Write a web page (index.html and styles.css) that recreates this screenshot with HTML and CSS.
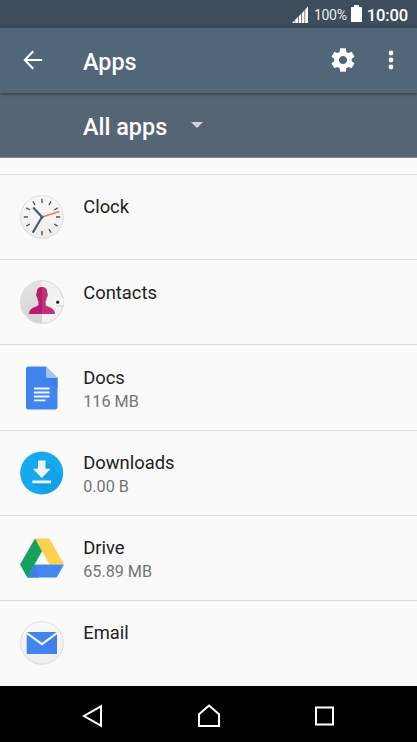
FILE: index.html
```
<!DOCTYPE html>
<html lang="en">
<head>
    <meta charset="UTF-8">
    <meta name="viewport" content="width=device-width, initial-scale=1.0">
    <title>Apps</title>

    <link rel="stylesheet" href="styles.css">

</head>
<body>

    <div class="status-bar">
        <svg class="signal" width="17" height="17" viewBox="0 0 17 17">
            <path fill="#fff" d="M0 17 L2.6 14.3 V17Z M3.2 13.8 L6 11 V17 H3.2Z M6.7 10.3 L9.3 7.6 V17 H6.7Z M10 6.9 L12.5 4.3 V17 H10Z M13.2 3.6 L16 0.6 V17 H13.2Z"/>
        </svg>
        <span class="percent">100%</span>
        <svg class="battery" width="11" height="17" viewBox="0 0 11 17">
            <path fill="#fff" d="M3 0 H8 V2 H10.2 Q11 2 11 2.8 V16.2 Q11 17 10.2 17 H0.8 Q0 17 0 16.2 V2.8 Q0 2 0.8 2 H3Z"/>
        </svg>
        <span class="time">10:00</span>
    </div>

    <header class="toolbar">
        <svg class="back" width="20" height="20" viewBox="0 0 20 20">
            <path fill="none" stroke="#fff" stroke-width="2" d="M10.2 1.3 L1.8 10 L10.2 18.7 M1.8 10 H19.2"/>
        </svg>
        <h1>Apps</h1>
        <svg class="settings" width="28" height="28" viewBox="0 0 24 24">
            <path fill="#fff" d="M19.43 12.98c.04-.32.07-.64.07-.98s-.03-.66-.07-.98l2.11-1.65c.19-.15.24-.42.12-.64l-2-3.46c-.12-.22-.39-.3-.61-.22l-2.49 1c-.52-.4-1.08-.73-1.69-.98l-.38-2.65C14.46 2.18 14.25 2 14 2h-4c-.25 0-.46.18-.49.42l-.38 2.65c-.61.25-1.17.59-1.69.98l-2.49-1c-.23-.09-.49 0-.61.22l-2 3.46c-.13.22-.07.49.12.64l2.11 1.65c-.04.32-.07.65-.07.98s.03.66.07.98l-2.11 1.65c-.19.15-.24.42-.12.64l2 3.46c.12.22.39.3.61.22l2.49-1c.52.4 1.08.73 1.69.98l.38 2.65c.03.24.24.42.49.42h4c.25 0 .46-.18.49-.42l.38-2.65c.61-.25 1.17-.59 1.69-.98l2.49 1c.23.09.49 0 .61-.22l2-3.46c.12-.22.07-.49-.12-.64l-2.11-1.65zM12 15.5c-1.93 0-3.5-1.57-3.5-3.5s1.57-3.5 3.5-3.5 3.5 1.57 3.5 3.5-1.57 3.5-3.5 3.5z"/>
        </svg>
        <svg class="more" width="6" height="20" viewBox="0 0 6 20">
            <g fill="#fff">
                <circle cx="3" cy="3" r="2.4"/>
                <circle cx="3" cy="10" r="2.4"/>
                <circle cx="3" cy="17" r="2.4"/>
            </g>
        </svg>
    </header>

    <div class="filter">
        <span>All apps</span>
        <svg width="12" height="6" viewBox="0 0 12 6">
            <path fill="#d0d4de" d="M0 0 H12 L6 6Z"/>
        </svg>
    </div>

    <main class="app-list">
        <div class="app">
            <svg width="44" height="44" viewBox="0 0 44 44">
                <defs>
                    <linearGradient id="face" x1="0" y1="0" x2="0" y2="1">
                        <stop offset="0" stop-color="#f9f9f9"/>
                        <stop offset="1" stop-color="#ededed"/>
                    </linearGradient>
                </defs>
                <circle cx="22" cy="22" r="21.4" fill="url(#face)" stroke="#dadada" stroke-width=".9"/>
                <g stroke="#555" stroke-width="1.4">
                    <path id="ticks" d="M22 3.8 V8 M22 36 V40.2 M3.8 22 H8 M36 22 H40.2"/>
                    <use href="#ticks" transform="rotate(30 22 22)"/>
                    <use href="#ticks" transform="rotate(60 22 22)"/>
                </g>
                <path fill="none" stroke="#455a68" stroke-width="2.1" d="M13.2 12.5 L22 22 L12.8 37.5"/>
                <path stroke="#f0785a" stroke-width="1.4" d="M22 22 L39.5 16.5"/>
                <circle cx="22" cy="22" r="1.6" fill="#455a68"/>
            </svg>
            <div class="info">
                <p class="name">Clock</p>
            </div>
        </div>

        <div class="app">
            <svg width="44" height="44" viewBox="0 0 44 44">
                <defs>
                    <linearGradient id="page" x1="0" y1="0" x2="0" y2="1">
                        <stop offset="0" stop-color="#e4e4e4"/>
                        <stop offset="1" stop-color="#d3d3d3"/>
                    </linearGradient>
                </defs>
                <circle cx="22" cy="22" r="21.4" fill="#f1f1f1" stroke="#d2d2d2" stroke-width=".9"/>
                <path fill="url(#page)" d="M22 1 A21 21 0 0 0 22 43Z"/>
                <path fill="#b91a6d" d="M22 7 C26 7 27.4 9.5 27.2 13 C28.2 13.5 28 16.5 26.8 17.5 C26.5 19.5 26 20.5 25.6 21.5 V25 C27 27.5 35 27 35 34 H9 C9 27 17 27.5 18.4 25 V21.5 C18 20.5 17.5 19.5 17.2 17.5 C16 16.5 15.8 13.5 16.8 13 C16.6 9.5 18 7 22 7Z"/>
                <path fill="#fff" fill-opacity=".1" d="M22 7 C26 7 27.4 9.5 27.2 13 C28.2 13.5 28 16.5 26.8 17.5 L25.6 21.5 V25 C27 27.5 35 27 35 34 H22Z"/>
                <path fill="#d0d0d0" d="M36 19.5 H44 V26.5 H36Z"/>
                <path fill="#f8f8f8" d="M35 18.5 H43.6 V25.4 H35Z"/>
                <circle cx="37.7" cy="22.2" r="1.6" fill="#222"/>
            </svg>
            <div class="info">
                <p class="name">Contacts</p>
            </div>
        </div>

        <div class="app">
            <svg width="44" height="44" viewBox="0 0 44 44">
                <path fill="#4284ee" d="M8.5 .5 H26 L37.5 12 V41 Q37.5 43.5 35 43.5 H8.5 Q6 43.5 6 41 V3 Q6 .5 8.5 .5Z"/>
                <path fill="#3d7ce2" d="M27 12 H37.5 V22Z"/>
                <path fill="#a7c4f8" d="M26 .5 L37.5 12 H28 Q26 12 26 10Z"/>
                <path stroke="#f1f5fd" stroke-width="1.9" d="M14 22.5 H29.5 M14 26.5 H29.5 M14 30.5 H29.5 M14 34.4 H25.5"/>
            </svg>
            <div class="info">
                <p class="name">Docs</p>
                <p class="size">116 MB</p>
            </div>
        </div>

        <div class="app">
            <svg width="44" height="44" viewBox="0 0 44 44">
                <circle cx="21.7" cy="22" r="21.5" fill="#15a9ef"/>
                <path fill="#1293d3" d="M25.5 9.5 L42.5 26.5 A21.5 21.5 0 0 1 27 42.8 L12.5 32 L31 29.5 L22 27Z" opacity=".35"/>
                <path fill="#f2f2f2" d="M18 9.5 H25.5 V17.8 H30.8 L21.8 27 L12.8 17.8 H18Z"/>
                <path fill="#f2f2f2" d="M12.3 29.5 H31 V32.3 H12.3Z"/>
            </svg>
            <div class="info">
                <p class="name">Downloads</p>
                <p class="size">0.00 B</p>
            </div>
        </div>

        <div class="app">
            <svg width="44" height="44" viewBox="0 0 44 44">
                <path fill="#ffd04b" d="M15 2.5 H29.5 L44 28.5 H29.5Z"/>
                <path fill="#4485ee" d="M14.5 28.5 H44 L36.6 41.5 H7.2Z"/>
                <path fill="#3f7ee5" d="M14.5 28.5 L19 41.5 H7.2Z"/>
                <path fill="#16a05d" d="M15 2.5 L22 15.2 L7.2 41.5 L0 28.5Z"/>
            </svg>
            <div class="info">
                <p class="name">Drive</p>
                <p class="size">65.89 MB</p>
            </div>
        </div>

        <div class="app">
            <svg width="44" height="44" viewBox="0 0 44 44">
                <circle cx="22" cy="22" r="21.4" fill="url(#face)" stroke="#dadada" stroke-width=".9"/>
                <path fill="#4285f0" d="M6.7 11 H37 V33 H6.7Z"/>
                <path fill="#3e7fea" d="M22 23 L37 12 V33Z"/>
                <path fill="none" stroke="#f3f5f8" stroke-width="2.1" d="M6.5 11.8 L22 23.2 L37.2 11.8"/>
                <path fill="#4285f0" d="M9 11 H35 L22 20.5Z"/>
            </svg>
            <div class="info">
                <p class="name">Email</p>
            </div>
        </div>
    </main>

    <nav class="nav-bar">
        <svg width="24" height="24" viewBox="0 0 24 24">
            <path d="M20 2.3 V21.7 L3 12Z"/>
        </svg>
        <svg width="24" height="24" viewBox="0 0 24 24">
            <path d="M12 1.5 L22 10.3 V22 H2 V10.3Z"/>
        </svg>
        <svg width="24" height="24" viewBox="0 0 24 24">
            <path d="M4 3.5 H21 V20.5 H4Z"/>
        </svg>
    </nav>

</body>
</html>
```

FILE: styles.css
```
*{
    margin:0;
    padding:0;
    box-sizing:border-box;
}

body{
    display:flex;
    flex-direction:column;
    height:742px;
    overflow:hidden;
    background-color:#fafafa;
    font-family:Roboto, sans-serif;
    color:#212121;
}

svg{
    display:block;
    flex:none;
}

/* top bars */

.status-bar{
    display:flex;
    flex:none;
    align-items:center;
    justify-content:flex-end;
    height:28px;
    padding-right:9px;
    background-color:#3e4d5c;
    color:#fff;
}

.signal{
    margin:1px 5px 0 0;
}

.percent{
    font-size:14px;
    letter-spacing:-.3px;
    color:#e8ebee;
    margin-right:4px;
    padding-top:1px;
}

.battery{
    margin:-1px 5px 0 0;
}

.time{
    font-size:16.5px;
    font-weight:500;
    letter-spacing:-.1px;
    padding-top:2px;
}

.toolbar{
    position:relative;
    display:flex;
    flex:none;
    align-items:center;
    height:65px;
    padding:0 23px 0 22.5px;
    background-color:#516679;
    box-shadow:0 1px 3px rgba(0,0,0,.45);
    color:#fff;
}

.back{
    margin-top:-1px;
}

.toolbar h1{
    font-size:23.4px;
    font-weight:500;
    margin-left:40.5px;
    padding-top:3px;
}

.settings{
    margin:-1px 0 0 auto;
}

.more{
    margin:-1px 0 0 31px;
}

.filter{
    display:flex;
    flex:none;
    align-items:center;
    height:65px;
    padding:3px 0 0 83px;
    background-color:#566573;
    border-bottom:1px solid #7d8794;
    color:#fff;
    font-size:23.4px;
    font-weight:500;
}

.filter svg{
    margin:-3px 0 0 23.5px;
}

/* list */

.app-list{
    flex:1;
    padding-top:16.1px;
}

.app{
    display:flex;
    align-items:center;
    height:85.2px;
    padding-left:20px;
    border-top:1px solid #dadada;
}

.info{
    height:43.5px;
    margin-left:19.2px;
}

.name{
    font-size:18.4px;
    line-height:24px;
}

.size{
    font-size:16.2px;
    line-height:23px;
    color:#757575;
}

/* bottom bar */

.nav-bar{
    display:flex;
    flex:none;
    align-items:center;
    justify-content:space-between;
    height:56px;
    padding:3px 81px 0;
    background-color:#000;
}

.nav-bar path{
    fill:none;
    stroke:#fff;
    stroke-width:2;
}
```
